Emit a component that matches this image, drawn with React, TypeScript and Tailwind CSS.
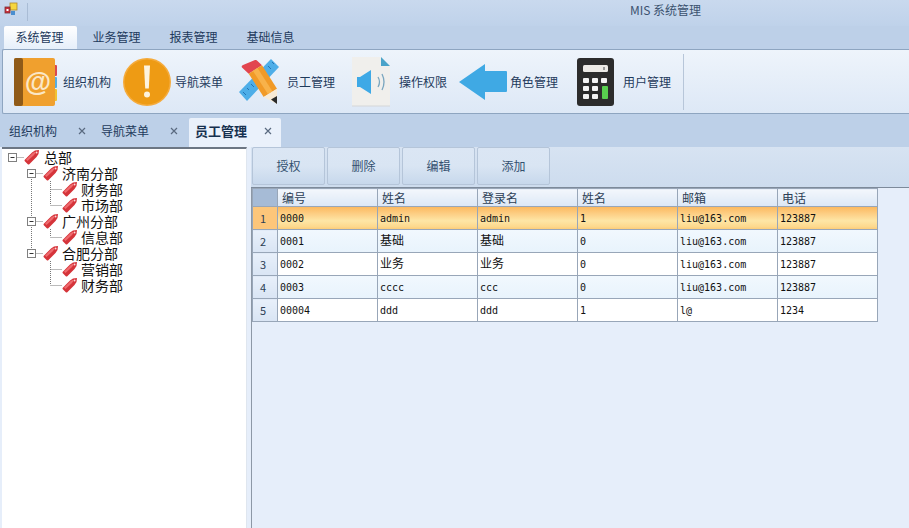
import React from "react";

const cjk = '"Noto Sans CJK SC", "Liberation Sans", sans-serif';

function AppIcon() {
  return (
    <svg width="14" height="14" viewBox="0 0 14 14">
      <rect x="6" y="1" width="7" height="7" fill="#f6d640" stroke="#b0892c" strokeWidth="0.8" />
      <rect x="1" y="5" width="5" height="6" fill="#c8323c" stroke="#7a2b33" strokeWidth="0.8" />
      <rect x="2.5" y="7" width="2" height="2" fill="#fff" />
      <rect x="7" y="9" width="4" height="4" fill="#4a8fd0" />
    </svg>
  );
}

function BookIcon() {
  return (
    <svg width="48" height="50" viewBox="0 0 48 50">
      <rect x="40" y="8" width="4" height="11" rx="1" fill="#d8494f" />
      <rect x="40" y="20" width="4" height="11" rx="1" fill="#58aee0" />
      <rect x="40" y="32" width="4" height="12" rx="1" fill="#f1c232" />
      <rect x="1" y="1" width="41" height="48" rx="2" fill="#f0a02e" />
      <rect x="1" y="1" width="9" height="48" rx="2" fill="#8f5a18" />
      <text x="25" y="34" textAnchor="middle" fontSize="27" fontWeight="700" fill="#fbe7c6" fontFamily="Liberation Sans, sans-serif">@</text>
    </svg>
  );
}

function AlertIcon() {
  return (
    <svg width="48" height="50" viewBox="0 0 48 50">
      <circle cx="24" cy="25" r="24" fill="#f5ab3c" />
      <circle cx="24" cy="25" r="22.5" fill="#ee9b14" />
      <path d="M21 8.5h6l-1.2 23h-3.6z" fill="#fdf3dd" />
      <circle cx="24" cy="37.5" r="3" fill="#fdf3dd" />
    </svg>
  );
}

function PencilIcon() {
  return (
    <svg width="46" height="50" viewBox="0 0 46 50">
      <path d="M1 35L9 44 41 10 33 2z" fill="#4eaee8" />
      <path d="M5 35l3 3M9 31l2 2M13 27l3 3M17 23l2 2M30 9l3 3M34 5l2 2" stroke="#2474b4" strokeWidth="1" />
      <path d="M4 10.500Q3 9 5 8L17 3q1.500-.5 2.500 1L24 8.300 10.700 16.700z" fill="#e2454f" />
      <path d="M10.700 16.700L24 8.300l15 23.400L25.700 40z" fill="#f19a27" />
      <path d="M15 14L19.500 11.100 34.500 34.500 30 37.300z" fill="#f8b24a" />
      <path d="M25.700 40L39 31.700 39 47z" fill="#f7ead6" />
      <path d="M33 42.500L39 39 39 47z" fill="#2a2a2a" />
    </svg>
  );
}

function SpeakerIcon() {
  return (
    <svg width="38" height="50" viewBox="0 0 38 50">
      <path d="M0 0H29L38 9V49H0z" fill="#f0efec" />
      <path d="M0 49h38" stroke="#d5d6d8" />
      <path d="M29 0L38 9 29 9z" fill="#4aa3c9" />
      <path d="M5 20h3L19 13V37L8 30H5z" fill="#3ea9e6" />
      <path d="M26 20q3 5 0 10M30 17q4 8 0 16" stroke="#7aa6bf" strokeWidth="1.300" fill="none" />
    </svg>
  );
}

function ArrowIcon() {
  return (
    <svg width="48" height="50" viewBox="0 0 48 50">
      <path d="M0 25L26 7v7h21a1 1 0 0 1 1 1v19a1 1 0 0 1-1 1H26v8z" fill="#3fa9e4" />
    </svg>
  );
}

function CalcIcon() {
  const keys = [
    [6, 21], [15, 21], [24, 21],
    [6, 29], [15, 29], [6, 37], [15, 37],
  ];
  return (
    <svg width="37" height="50" viewBox="0 0 37 50">
      <rect x="0" y="1" width="37" height="48" rx="3" fill="#2c2c2c" />
      <rect x="6" y="8" width="25" height="7" rx="1.500" fill="#eceae6" />
      <rect x="26" y="10" width="2" height="3" fill="#999" />
      {keys.map(([x, y], i) => (
        <rect key={i} x={x} y={y} width="6" height="5" rx="1" fill="#f4f4f4" />
      ))}
      <rect x="25" y="29" width="6" height="13" rx="1" fill="#58cf4f" />
    </svg>
  );
}

function TagIcon() {
  return (
    <svg width="16" height="16" viewBox="0 0 16 16" className="shrink-0">
      <path d="M.8 10.800L8 3.500 11 1.500 15 1l-.5 4-2 3-7.200 7.200q-.8.700-1.500 0L.8 12.300q-.7-.7 0-1.500z" fill="#d5343a" />
      <path d="M2 10.500L8.500 4.200 10.800 2.700 11.800 3.800 9.500 6.500 3.500 12z" fill="#ee6a6e" />
      <circle cx="12.600" cy="3.500" r="0.900" fill="#fbd9d9" />
    </svg>
  );
}

function CloseX() {
  return (
    <svg width="8" height="8" viewBox="0 0 8 8" className="shrink-0">
      <path d="M1 1l6 6M7 1L1 7" stroke="#5a6a80" strokeWidth="1.200" />
    </svg>
  );
}

type Node = {
  label: string;
  w: number;
  box?: number;
  full?: number[];
  half?: number[];
  hFrom: number;
};

const tree: Node[] = [
  { label: "总部", w: 21, box: 9.5, hFrom: 14 },
  { label: "济南分部", w: 40, box: 28.5, hFrom: 33, full: [], half: [] },
  { label: "财务部", w: 59, hFrom: 47.5, full: [28.5, 47.5] },
  { label: "市场部", w: 59, hFrom: 47.5, full: [28.5], half: [47.5] },
  { label: "广州分部", w: 40, box: 28.5, hFrom: 33, full: [28.5] },
  { label: "信息部", w: 59, hFrom: 47.5, full: [28.5], half: [47.5] },
  { label: "合肥分部", w: 40, box: 28.5, hFrom: 33, half: [28.5] },
  { label: "营销部", w: 59, hFrom: 47.5, full: [47.5] },
  { label: "财务部", w: 59, hFrom: 47.5, half: [47.5] },
];

function Connector({ n }: { n: Node }) {
  const dot = { stroke: "#777", strokeWidth: 1, strokeDasharray: "1 1" };
  return (
    <svg width={n.w} height="16" viewBox={`0 0 ${n.w} 16`} className="shrink-0">
      {(n.full ?? []).map((x) => (
        <line key={x} x1={x} x2={x} y1="0" y2="16" {...dot} />
      ))}
      {(n.half ?? []).map((x) => (
        <line key={x} x1={x} x2={x} y1="0" y2="8" {...dot} />
      ))}
      {n.label === "济南分部" && <line x1={28.5} x2={28.5} y1="8" y2="16" {...dot} />}
      <line x1={n.box !== undefined ? n.box + 5 : n.hFrom} x2={n.w} y1="8.500" y2="8.500" {...dot} />
      {n.box !== undefined && (
        <g>
          <rect x={n.box - 4} y="4.500" width="8" height="8" fill="#fff" stroke="#808080" />
          <line x1={n.box - 2} x2={n.box + 2} y1="8.500" y2="8.500" stroke="#333" />
        </g>
      )}
    </svg>
  );
}

const ribbon = [
  { label: "组织机构", w: 110, slot: 50, Icon: BookIcon },
  { label: "导航菜单", w: 115, slot: 52, Icon: AlertIcon },
  { label: "员工管理", w: 114, slot: 49, Icon: PencilIcon },
  { label: "操作权限", w: 107, slot: 47, Icon: SpeakerIcon },
  { label: "角色管理", w: 118, slot: 51, Icon: ArrowIcon },
  { label: "用户管理", w: 106, slot: 46, Icon: CalcIcon },
];

const cols = ["编号", "姓名", "登录名", "姓名", "邮箱", "电话"];
const rows = [
  ["0000", "admin", "admin", "1", "liu@163.com", "123887"],
  ["0001", "基础", "基础", "0", "liu@163.com", "123887"],
  ["0002", "业务", "业务", "0", "liu@163.com", "123887"],
  ["0003", "cccc", "ccc", "0", "liu@163.com", "123887"],
  ["00004", "ddd", "ddd", "1", "l@", "1234"],
];

function rowBg(i: number) {
  if (i === 0) return "bg-[linear-gradient(180deg,#fcb95f_0%,#fdcf85_30%,#fee6a6_60%,#fdd98e_85%,#fcc871_100%)]";
  return i % 2 === 1 ? "bg-[linear-gradient(180deg,#f1f8fe,#e8f3fc)]" : "bg-white";
}

export default function App() {
  return (
    <div
      className="w-[909px] h-[528px] overflow-hidden flex flex-col bg-[#bdd0e8] text-[12px] text-[#1e3a5c]"
      style={{ fontFamily: cjk }}
    >
      <div className="h-[26px] shrink-0 flex items-start bg-[linear-gradient(180deg,#c9d9ee,#bfd2ea)]">
        <div className="ml-[4px] mt-[2px]"><AppIcon /></div>
        <div className="ml-[9px] mt-[3px] h-[18px] w-px bg-[#a9bcd5]" />
        <div className="ml-[602px] mt-[1px] leading-[18px] text-[#3b526f]">MIS 系统管理</div>
      </div>

      <div className="h-[23px] shrink-0 flex items-end pl-[4px]">
        <div className="w-[73px] h-[23px] rounded-t-[2px] bg-[linear-gradient(180deg,#ffffff,#e6effa)] text-center leading-[21px] pr-[2px]">系统管理</div>
        <div className="ml-[1px] w-[77px] h-[23px] text-center leading-[21px]">业务管理</div>
        <div className="w-[77px] h-[23px] text-center leading-[21px]">报表管理</div>
        <div className="w-[77px] h-[23px] text-center leading-[21px]">基础信息</div>
      </div>

      <div className="h-[65px] shrink-0 ml-[2px] flex items-center border-y border-[#8ea5c0] border-l rounded-l-[2px] bg-[linear-gradient(180deg,#eef4fb,#dde8f6)] pl-[10px]">
        {ribbon.map(({ label, w, slot, Icon }) => (
          <div key={label} className="flex items-center shrink-0" style={{ width: w }}>
            <div className="shrink-0" style={{ width: slot }}><Icon /></div>
            <span className="leading-[16px]">{label}</span>
          </div>
        ))}
        <div className="h-[56px] w-px bg-[#b7c6d9]" />
      </div>

      <div className="h-[33px] shrink-0 flex items-end">
        <div className="w-[100px] h-[29px] flex items-center pl-[9px] pb-[3px]">
          <span>组织机构</span><span className="ml-[21px] flex"><CloseX /></span>
        </div>
        <div className="w-[89px] h-[29px] flex items-center pl-[1px] pb-[3px]">
          <span>导航菜单</span><span className="ml-[21px] flex"><CloseX /></span>
        </div>
        <div className="w-[92px] h-[29px] flex items-center pl-[6px] pb-[4px] rounded-t-[2px] bg-[#eaf1fb] font-bold text-[13px] text-[#16304f]">
          <span>员工管理</span><span className="ml-[17px] flex"><CloseX /></span>
        </div>
      </div>

      <div className="flex-1 flex min-h-0 bg-[#e6eefa]">
        <div className="ml-[2px] w-[245px] shrink-0 bg-white border-t-2 border-t-[#6c7683] border-r-[1px] border-r-[#dfe6ef] pl-[1px] text-[14px] text-[#111]">
          {tree.map((n, i) => (
            <div key={i} className="h-[16px] flex items-center whitespace-nowrap">
              <Connector n={n} />
              <TagIcon />
              <span className={i === 0 ? "ml-[4px] leading-[16px]" : "ml-[3px] leading-[16px]"}>{n.label}</span>
            </div>
          ))}
        </div>

        <div className="flex-1 min-w-0 ml-[4px] flex flex-col">
          <div className="h-[41px] shrink-0 flex items-start gap-[2px] pl-[1px] bg-[linear-gradient(180deg,#d7e3f2,#cddcee)] border-b border-[#7d8a9a]">
            {["授权", "删除", "编辑", "添加"].map((b) => (
              <div key={b} className="w-[73px] h-[38px] rounded-[2px] border border-[#b5c5d9] bg-[linear-gradient(180deg,#dbe6f4,#d9e5f3_50%,#c7d8ec)] flex items-center justify-center text-[#33506f]">{b}</div>
            ))}
          </div>
          <div className="flex-1 border-l border-[#8d98a6]">
            <table className="border-collapse table-fixed w-[625px] text-[#111]">
              <colgroup>
                <col className="w-[25px]" />
                {cols.map((_, i) => <col key={i} className="w-[100px]" />)}
              </colgroup>
              <thead>
                <tr className="h-[18px]">
                  <th className="p-0 border border-[#98a6b8] bg-[#a6bbd6]" />
                  {cols.map((c, i) => (
                    <th key={i} className="p-0 pl-[4px] border border-[#98a6b8] bg-[linear-gradient(180deg,#f3f7fc,#dce7f6)] text-left font-normal leading-[17px] text-[#2c3e55]">{c}</th>
                  ))}
                </tr>
              </thead>
              <tbody>
                {rows.map((r, i) => (
                  <tr key={i} className={`h-[23px] ${rowBg(i)}`}>
                    <td className={`p-0 pl-[7px] border border-[#98a6b8] text-[11px] text-[#2c3e55] ${i === 0 ? "bg-[#fdc67a]" : "bg-[linear-gradient(180deg,#e8f0fa,#d9e5f4)]"}`}>{i + 1}</td>
                    {r.map((v, j) => (
                      <td
                        key={j}
                        className="p-0 pl-[2px] border border-[#98a6b8] whitespace-nowrap"
                        style={{ fontFamily: '"DejaVu Sans Mono", "Noto Sans CJK SC", monospace', fontSize: /[^\x00-\x7f]/.test(v) ? 12 : 10 }}
                      >
                        {v}
                      </td>
                    ))}
                  </tr>
                ))}
              </tbody>
            </table>
          </div>
        </div>
      </div>
    </div>
  );
}
